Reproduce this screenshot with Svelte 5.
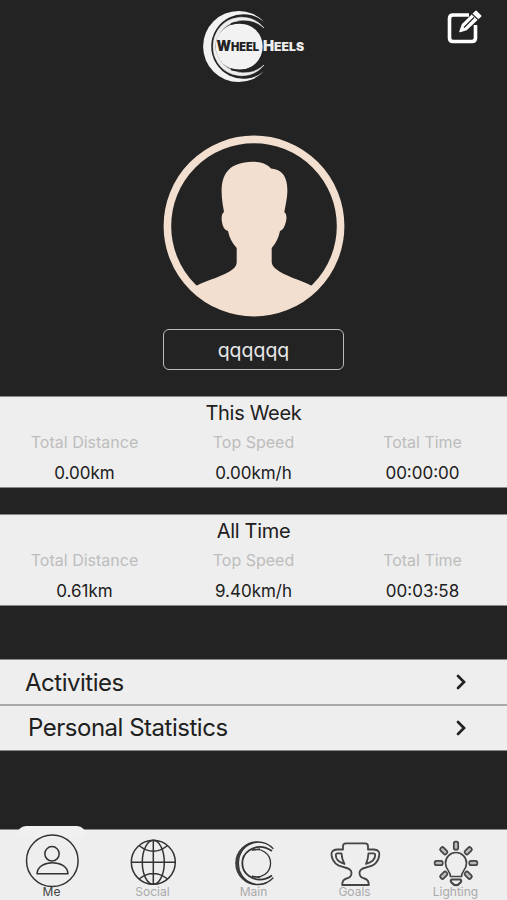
<script lang="ts">
	type Stats = { title: string; distance: string; speed: string; time: string };

	let username = $state('qqqqqq');
	let active = $state('Me');

	const panels: Stats[] = [
		{ title: 'This Week', distance: '0.00km', speed: '0.00km/h', time: '00:00:00' },
		{ title: 'All Time', distance: '0.61km', speed: '9.40km/h', time: '00:03:58' }
	];

	const links = ['Activities', 'Personal Statistics'];
	const tabs = ['Me', 'Social', 'Main', 'Goals', 'Lighting'];
	const rays = [0, 45, 90, 135, 225, 270, 315];
</script>

<div class="screen">
	<header class="header">
		<svg class="logo" width="106" height="76" viewBox="0 0 106 76" aria-label="Wheel Heels">
			<path d="M63 13.700A35.500 35.500 0 1 0 63 63.300A32.200 32.200 0 0 1 10.200 38.500A32.200 32.200 0 0 1 63 13.700Z" fill="#f2f2f2" />
			<path d="M63 20A28.500 28.500 0 0 0 12.200 38.500A28.500 28.500 0 0 0 63 57A29 29 0 0 1 14.200 38.500A29 29 0 0 1 63 20Z" fill="#eee" stroke="#eee" stroke-width="0.600" />
			<circle cx="38.200" cy="38.600" r="23.500" fill="#f2f2f2" />
			<path d="M30 17Q42 13.500 52 19L45 15.200Q37 13 30 15ZM30 60.200Q42 63.700 52 58.200L45 62Q37 64.200 30 62.200Z" fill="#232323" />
			<text class="wordmark dark" x="15.500" y="42.800" textLength="42.500" lengthAdjust="spacingAndGlyphs"><tspan class="cap">W</tspan>HEEL</text>
			<text class="wordmark" x="62" y="42.800" textLength="41" lengthAdjust="spacingAndGlyphs"><tspan class="cap">H</tspan>EELS</text>
		</svg>
		<button class="edit" aria-label="Edit profile">
			<svg width="38" height="38" viewBox="0 0 38 38" fill="none">
				<path d="M24 7H8Q4.500 7 4.500 10.500V30Q4.500 33.500 8 33.500H27Q30.500 33.500 30.500 30V17" stroke="#fff" stroke-width="3.600" />
				<path d="M15 23.500L17.500 16.500L31 3.200L35.800 8L21.500 21.500Z" fill="#fff" stroke="#fff" stroke-width="1.500" stroke-linejoin="round" />
				<path d="M19 19.500L29 9.500M27 6L33.500 12" stroke="#232323" stroke-width="1.100" />
			</svg>
		</button>
	</header>

	<section class="profile">
		<svg width="182" height="182" viewBox="0 0 182 182">
			<circle cx="91" cy="91" r="86.600" fill="none" stroke="#f3dfd0" stroke-width="7.600" />
			<path
				d="M33 151C44 145 62 141 70 134Q73.700 131 73.700 127V113Q67 106 65 96Q60 95 58.800 86Q58 79 61 77L59.500 68C56.500 46 60 27 90 26.700Q102 26.700 108 33.500C124 34.500 126.500 50 123 68L121.300 77Q124.500 79 123 86.500Q121 95 117 96Q115 106 108.700 113V127Q109 131 113 134C121 141 138 145 149 151A83 83 0 0 1 33 151Z"
				fill="#f3dfd0"
			/>
			<path d="M32 151Q91 162 150 151A84 84 0 0 1 32 151Z" fill="#f3dfd0" />
		</svg>
		<div class="username">{username}</div>
	</section>

	{#each panels as panel}
		<section class="panel">
			<h2>{panel.title}</h2>
			<div class="stats">
				<span class="stat-label">Total Distance</span>
				<span class="stat-label">Top Speed</span>
				<span class="stat-label">Total Time</span>
				<span class="stat-value">{panel.distance}</span>
				<span class="stat-value">{panel.speed}</span>
				<span class="stat-value">{panel.time}</span>
			</div>
		</section>
	{/each}

	<div class="links">
		{#each links as link}
			<button class="link">
				<span>{link}</span>
				<svg width="12" height="16" viewBox="0 0 12 16" fill="none">
					<path d="M3 2L9 8L3 14" stroke="#222" stroke-width="2.700" stroke-linecap="round" />
				</svg>
			</button>
		{/each}
	</div>

	<nav class="tabs">
		{#each tabs as tab}
			<button class="tab" class:active={tab === active} onclick={() => (active = tab)}>
				<svg width="60" height="56" viewBox="0 0 60 56" fill="none" stroke="#333" stroke-width="1.500">
					{#if tab === 'Me'}
						<circle cx="30.300" cy="28.700" r="25.800" />
						<circle cx="30" cy="21.800" r="7.200" />
						<path d="M15 41.700C16 27 45 27 46 41.700Z" stroke-linejoin="round" />
					{:else if tab === 'Social'}
						<circle cx="30.300" cy="30.300" r="22" />
						<ellipse cx="30.300" cy="30.300" rx="11" ry="22" />
						<path d="M30.300 8.300V52.300M8.300 30.300H52.300M16 13.500Q30.300 25 44.600 13.500M16 47Q30.300 36 44.600 47" />
					{:else if tab === 'Main'}
						<path d="M49 16.500A21.500 21.500 0 1 0 49 46A20 20 0 0 1 14.500 31.200A20 20 0 0 1 49 16.500Z" fill="#444" stroke-width="1.200" stroke-linejoin="round" />
						<path d="M48 19Q36 11 25 18.500A15.500 15.500 0 0 0 25 44Q36 51.500 48 43.500" stroke-width="1.800" />
						<path d="M28 18.300A13.800 13.800 0 1 1 28 44.200M28 18.300L36 17M28 44.200L36 45.500" stroke-width="1.300" />
					{:else if tab === 'Goals'}
						<g stroke="#444" stroke-width="1.800" stroke-linejoin="round">
							<path d="M18 17.500V14Q18 11.300 21 11.300H40Q43 11.300 43 14V17.500H49Q55 18 54.300 23C53.500 31 47 34.500 41 35.500Q34.500 37 34.500 41Q34.500 45.500 39.500 46.500Q43.800 47.500 43.800 53H17.200Q17.200 47.500 21.500 46.500Q26.500 45.500 26.500 41Q26.500 37 20 35.500C14 34.500 7.500 31 6.500 23Q6 18 12 17.500Z" />
							<path d="M12.500 21.300H16.500Q17 28 19.500 32Q10.500 29 10.800 23Q10.800 21.300 12.500 21.300ZM48.500 21.300H43.500Q43 28 41 32Q50.500 29 50.200 23Q50.200 21.300 48.500 21.300Z" />
						</g>
					{:else}
						<g stroke="#444" stroke-width="1.700">
							<path d="M24.500 44.500C24.500 39 19.500 38 19.500 31A10.500 10.500 0 0 1 40.500 31C40.500 38 35.500 39 35.500 44.500Z" />
							<path d="M25.500 47.500H34.500Q36 49 34.500 50.500Q30 56 25.500 50.500Q24 49 25.500 47.500Z" stroke-width="2" />
							{#each rays as angle}
								<rect x="27.800" y="9.700" width="4.400" height="8" rx="1.700" transform="rotate({angle} 30 31)" fill="#bbb" />
							{/each}
						</g>
					{/if}
				</svg>
				<span>{tab}</span>
			</button>
		{/each}
	</nav>
</div>

<style>
	:global(body) {
		background: #232323;
	}

	.screen {
		display: flex;
		flex-direction: column;
		height: 900px;
		overflow: hidden;
		background: #232323;
		font-family: Inter, 'Liberation Sans', sans-serif;
		color: #202020;
	}

	button {
		margin: 0;
		padding: 0;
		border: 0;
		background: none;
		font: inherit;
		color: inherit;
	}

	svg {
		display: block;
	}

	.header {
		display: grid;
		grid-template-columns: 1fr 106px 1fr;
		align-items: start;
		height: 135px;
		box-sizing: border-box;
		padding-top: 8px;
	}

	.logo {
		grid-column: 2;
	}

	.wordmark {
		font-family: Inter, sans-serif;
		font-size: 11.5px;
		font-weight: 900;
		fill: #eee;
	}

	.wordmark .cap {
		font-size: 14px;
	}

	.wordmark.dark {
		fill: #222;
	}

	.edit {
		justify-self: end;
		margin-right: 24px;
	}

	.profile {
		display: flex;
		flex-direction: column;
		align-items: center;
		gap: 12px;
		height: 261px;
	}

	.username {
		box-sizing: border-box;
		width: 181px;
		height: 41px;
		border: 1.5px solid #bbb;
		border-radius: 6px;
		text-align: center;
		font-size: 19.5px;
		line-height: 41px;
		color: #e8e8e8;
	}

	.panel {
		box-sizing: border-box;
		height: 92px;
		margin-bottom: 26px;
		border-top: 1px solid #888;
		border-bottom: 1px solid #888;
		background: #eee;
		text-align: center;
	}

	h2 {
		height: 31px;
		margin: 0;
		font-size: 20px;
		font-weight: 400;
		line-height: 32px;
		letter-spacing: -0.3px;
	}

	.stats {
		display: grid;
		grid-template-columns: repeat(3, 1fr);
		grid-auto-rows: 30px;
		line-height: 30px;
	}

	.stat-label {
		font-size: 16px;
		line-height: 28px;
		color: #bdbdbd;
	}

	.stat-value {
		font-size: 17px;
	}

	.links {
		margin-top: 27px;
	}

	.link {
		display: flex;
		align-items: center;
		justify-content: space-between;
		box-sizing: border-box;
		width: 100%;
		height: 45px;
		padding: 0 40px 0 25px;
		border-top: 1px solid #888;
		background: #eee;
		font-size: 24px;
		letter-spacing: -0.48px;
	}

	.link + .link {
		height: 47px;
		padding: 0 40px 1px 28px;
		border-top: 2px solid #aaa;
		border-bottom: 1px solid #888;
	}

	.tabs {
		display: grid;
		grid-template-columns: repeat(5, 1fr);
		height: 71px;
		box-sizing: border-box;
		margin-top: auto;
		padding: 0 1px;
		border-top: 1px solid #888;
		background: #eee;
	}

	.tab {
		position: relative;
		display: flex;
		flex-direction: column;
		align-items: center;
		padding-top: 2px;
		font-size: 12px;
		line-height: 14px;
		color: #aaa;
	}

	.tab svg {
		position: relative;
		margin-bottom: -3px;
	}

	.tab span {
		position: relative;
	}

	.tab.active {
		color: #444;
	}

	/* Raised tab behind the selected icon */
	.tab.active::before {
		content: '';
		position: absolute;
		top: -4px;
		left: 16px;
		width: 69px;
		height: 12px;
		border-radius: 9px 9px 0 0;
		background: #f0f0f0;
	}
</style>
